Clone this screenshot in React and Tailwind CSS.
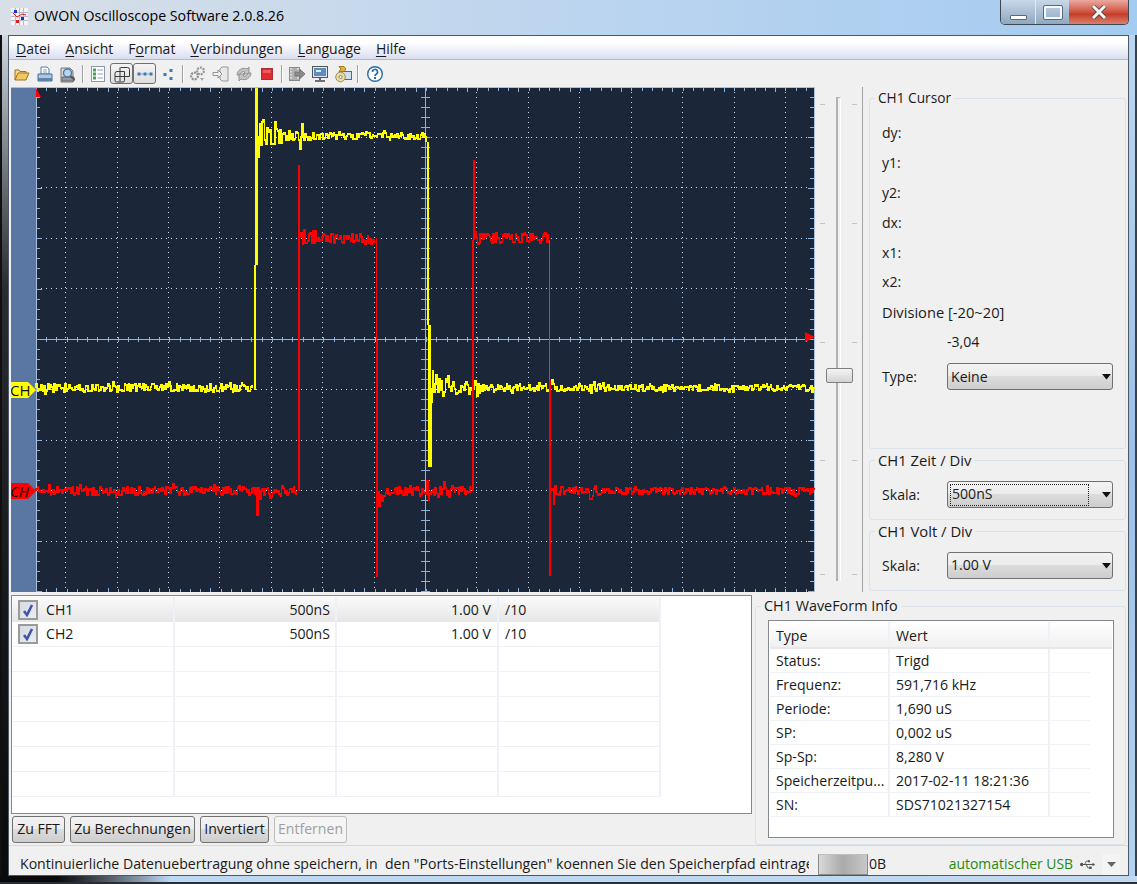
import React from "react";
import { FaUsb } from "react-icons/fa";

let seedCounter = 1;
function r() {
  seedCounter += 1;
  const v = Math.sin(seedCounter * 12.9898 + 4.1414) * 43758.5453;
  return v - Math.floor(v);
}
function noisy(x0, x1, y, amp, rings = []) {
  let d = `M${x0} ${y}`;
  for (let x = x0; x <= x1; x += 1.3) {
    let a = amp;
    for (const [rx, ra, dec] of rings) if (x >= rx) a += ra * Math.exp(-(x - rx) / dec);
    const u = r() * 2 - 1;
    const spike = r() > 0.9 ? 1.6 : 1;
    const n = Math.round(y + Math.sign(u) * Math.pow(Math.abs(u), 0.8) * a * spike);
    d += `V${n}H${(x + 1.3).toFixed(1)}`;
  }
  return d;
}
const yA = noisy(37, 254, 388, 4);
const yB = noisy(259, 427, 136, 3, [[259, 22, 14], [300, 14, 4], [378, 16, 4]]);
const yC = noisy(432, 815, 388, 3, [[432, 22, 12], [474, 16, 3], [551, 18, 3], [590, 10, 4]]);
const rA = noisy(37, 298, 491, 4.5, [[257, 22, 1.5], [268, 9, 4]]);
const rB = noisy(302, 376, 238, 5, [[302, 10, 3]]);
const rC = noisy(380, 472, 491, 4.5, [[380, 12, 4], [428, 14, 3], [445, 5, 5]]);
const rD = noisy(476, 549, 238, 5, [[476, 10, 3]]);
const rE = noisy(553, 815, 491, 3.5, [[553, 14, 4], [590, 9, 4]]);

const vMajor = [66, 118, 169, 220, 272, 323, 375, 477, 529, 580, 632, 683, 735, 786];
const hMajor = [137, 187, 238, 288, 389, 440, 490, 541];
const xTicks = [];
for (let x = 47; x < 815; x += 10.27) xTicks.push(Math.round(x));
const yTicks = [];
for (let y = 97; y < 591; y += 10.08) yTicks.push(Math.round(y));
const GRID = "#8db2dc";

function Plot() {
  return (
    <svg width="804" height="505" viewBox="12 87 804 505" className="block shrink-0" shapeRendering="crispEdges">
      <rect x="12" y="87" width="804" height="505" fill="#1b2639" />
      <rect x="12" y="87" width="25" height="505" fill="#5a76a3" />
      <path d="M37.5 87V592M12 87.5H815.5V592" stroke="#a8c0dc" fill="none" />
      {vMajor.map((x) => (
        <line key={x} x1={x + 0.5} x2={x + 0.5} y1="92" y2="590" stroke="#c0dcf8" strokeDasharray="1 4" />
      ))}
      {hMajor.map((y) => (
        <line key={y} x1="42" x2="812" y1={y + 0.5} y2={y + 0.5} stroke="#c0dcf8" strokeDasharray="1 4" />
      ))}
      <line x1="426.5" x2="426.5" y1="87" y2="592" stroke={GRID} />
      <line x1="37" x2="815" y1="339.5" y2="339.5" stroke={GRID} />
      {xTicks.map((x, i) => {
        const h = i % 5 === 1 ? 4 : 3;
        return (
          <path key={x} d={`M${x + 0.5} 88V${88 + h}M${x + 0.5} 592V${592 - h}M${x + 0.5} 337V342`} stroke={GRID} />
        );
      })}
      {yTicks.map((y, i) => (
        <path key={y} d={`M38 ${y + 0.5}H${i % 5 === 4 ? 43 : 41}M815 ${y + 0.5}H${i % 5 === 4 ? 809 : 811}M422 ${y + 0.5}H431`} stroke={GRID} />
      ))}

      <g fill="none" stroke="#ffff00" strokeWidth="1.5">
        <path d={yA} />
        <path d={yB} />
        <path d={yC} />
        <path d="M257 265V88" strokeWidth="3" />
        <path d="M256 390V265" strokeWidth="2" />
        <path d="M427 136V142" />
        <path d="M429 142V325" strokeWidth="2" />
        <path d="M430 325V467" strokeWidth="3" />
        <path d="M432 467V388" strokeWidth="1" />
      </g>
      <g fill="none" stroke="#ff0000" strokeWidth="1.5">
        <path d={rA} />
        <path d="M300 491V165" strokeWidth="2" />
        <path d={rB} />
        <path d="M377 238V340" strokeWidth="1" />
        <path d="M378 340V577" strokeWidth="2" />
        <path d={rC} />
        <path d="M474 491V420" />
        <path d="M474 420V240" strokeWidth="1.5" />
        <path d="M475 240V160" strokeWidth="2" />
        <path d={rD} />
        <path d={rE} />
        <path d="M551 380V576" strokeWidth="2" />
        <path d="M551 576V491" />
      </g>
      <line x1="550.5" x2="550.5" y1="240" y2="380" stroke="#5a6a80" />

      <g shapeRendering="auto">
        <polygon points="37,88 37,97 42,97" fill="#ff0000" />
        <polygon points="806,332 816,337 806,342" fill="#ff0000" />
        <polygon points="11,382 29,382 37,390 29,398 11,398" fill="#ffff00" />
        <polygon points="11,483 29,483 37,491 29,499 11,499" fill="#ff0000" />
        <text x="11" y="396" fontSize="15" fill="#111" fontFamily="'Open Sans',sans-serif">CH</text>
        <text x="11" y="497" fontSize="15" fill="#111" fontFamily="'Open Sans',sans-serif" fontStyle="italic">CH</text>
      </g>
    </svg>
  );
}

const Ico = ({ children }) => (
  <svg width="18" height="18" viewBox="0 0 18 18" fill="none" className="block">{children}</svg>
);

const icons = {
  open: (
    <Ico>
      <path d="M2 15V5h4l1 1.5h6V9" stroke="#a0701c" fill="#f6dc8e" />
      <path d="M2 15l3-7h11l-3 7z" stroke="#a0701c" fill="#f4c860" />
    </Ico>
  ),
  print: (
    <Ico>
      <path d="M5 2h6l2 2v5H5z" fill="#fff" stroke="#5a7ea8" />
      <path d="M7 5h4M7 7h4" stroke="#8aa4c4" />
      <path d="M2 9h14v5H2z" fill="#a9c8e6" stroke="#4a6e98" />
      <path d="M2 14h14v2H2z" fill="#6e98c4" stroke="#4a6e98" />
    </Ico>
  ),
  preview: (
    <Ico>
      <path d="M2 3h9l3 3v11H2z" fill="#dadada" stroke="#777" />
      <path d="M3 12h12v4H3z" fill="#999" stroke="#666" />
      <circle cx="8.5" cy="8" r="4" fill="#b8d4ee" stroke="#4a78a8" strokeWidth="1.4" />
      <path d="M11.5 11l4 4" stroke="#555" strokeWidth="2" />
    </Ico>
  ),
  list: (
    <Ico>
      <rect x="2.5" y="1.5" width="13" height="15" fill="#fff" stroke="#8a98a8" />
      <rect x="4" y="3.5" width="3" height="3" fill="#4aa050" />
      <rect x="4" y="7.5" width="3" height="3" fill="#4aa050" />
      <rect x="4" y="11.5" width="3" height="3" fill="#4aa050" />
      <path d="M8.5 5h5.5M8.5 9h5.5M8.5 13h5.5" stroke="#8aa0b8" />
    </Ico>
  ),
  grid: (
    <Ico>
      <path d="M7.5 2.5h7a2 2 0 0 1 2 2v7h-5M2 11.5V8.5a2 2 0 0 1 2-2h7.5v9a1.5 1.5 0 0 1-1.5 1.5H3.5a1.5 1.5 0 0 1-1.5-1.5zM7 2.5V16.5M2 11.5h9.5" stroke="#3a3a3a" />
    </Ico>
  ),
  line: (
    <Ico>
      <rect x="1.5" y="7.5" width="3" height="3" fill="#3a78b8" />
      <rect x="7.5" y="7.5" width="3" height="3" fill="#3a78b8" />
      <rect x="13.5" y="7.5" width="3" height="3" fill="#3a78b8" />
      <path d="M4.5 9h3M10.5 9h3" stroke="#7a9cc0" />
    </Ico>
  ),
  points: (
    <Ico>
      <rect x="10.5" y="4" width="3" height="3" fill="#3a78b8" />
      <rect x="4.5" y="8" width="3" height="3" fill="#3a78b8" />
      <rect x="10.5" y="12" width="3" height="3" fill="#3a78b8" />
    </Ico>
  ),
  gears: (
    <Ico>
      <circle cx="11.5" cy="6" r="3.4" stroke="#989898" strokeWidth="2.2" strokeDasharray="2 1" />
      <circle cx="5.5" cy="11" r="3.4" stroke="#909090" strokeWidth="2.2" strokeDasharray="2 1" />
      <path d="M11 13l2 3 2-3z" fill="#a8a8a8" />
    </Ico>
  ),
  enter: (
    <Ico>
      <path d="M10 2h6v14h-6l-2-2V4z" fill="#e8e8e8" stroke="#999" />
      <path d="M1 7.5h5V5l4 4-4 4v-2.5H1z" fill="#f4f4f4" stroke="#909090" />
    </Ico>
  ),
  sync: (
    <Ico>
      <path d="M2 10a7 7 0 0 1 10-6l2-2v7H8l2-2a3.5 3.5 0 0 0-5 3z" fill="#c4c4c4" stroke="#909090" />
      <path d="M16 8a7 7 0 0 1-10 6l-2 2V9h6l-2 2a3.5 3.5 0 0 0 5-3z" fill="#c4c4c4" stroke="#909090" />
    </Ico>
  ),
  stop: (
    <Ico>
      <rect x="3.5" y="3.5" width="11" height="11" fill="#e02c30" stroke="#a83038" />
      <rect x="5" y="5" width="8" height="3" fill="#f0585c" />
    </Ico>
  ),
  film: (
    <Ico>
      <rect x="1.5" y="2.5" width="10" height="13" fill="#b0b0b0" stroke="#8a8a8a" />
      <path d="M3 3v12M10 3v12" stroke="#ddd" strokeDasharray="1.5 1.5" strokeWidth="2" />
      <path d="M7 7h5V4.5l5 4.5-5 4.5V11H7z" fill="#8c8c8c" stroke="#777" />
    </Ico>
  ),
  monitor: (
    <Ico>
      <rect x="1.5" y="1.5" width="15" height="11" fill="#dfe8f2" stroke="#555" />
      <rect x="3" y="3" width="12" height="8" fill="#5c8cc0" />
      <rect x="5" y="5" width="5" height="2" fill="#e4eef8" />
      <path d="M9 13v2M4 16h10" stroke="#444" strokeWidth="1.6" />
    </Ico>
  ),
  cd: (
    <Ico>
      <rect x="7.5" y="6.5" width="10" height="8" fill="#cfe0f2" stroke="#3a6ea8" />
      <circle cx="6.5" cy="12" r="4.8" fill="#e8dc9c" stroke="#a09050" />
      <circle cx="6.5" cy="12" r="1.5" fill="#fff" stroke="#888" />
      <path d="M5 1.5h5l2 2.5-2 2.5H5l2-2.5z" fill="#e8b040" stroke="#a87818" />
    </Ico>
  ),
  help: (
    <svg width="18" height="18" viewBox="0 0 18 18" fill="none" className="block">
      <circle cx="9" cy="9" r="7.3" fill="#fff" stroke="#2a6aa8" strokeWidth="1.4" />
      <path d="M6.5 7a2.5 2.5 0 1 1 3.6 2.2c-.8.4-1.1.9-1.1 1.8" stroke="#2a6aa8" strokeWidth="1.7" />
      <rect x="8" y="12" width="2" height="2" fill="#2a6aa8" />
    </svg>
  ),
};

const Slot = ({ children, active }) => (
  <div
    className={
      "w-[23px] h-[21px] flex items-center justify-center rounded-[3px] " +
      (active ? "border border-[#6f6f6f] bg-gradient-to-b from-[#f4f4f4] to-[#dedede]" : "")
    }
  >
    {children}
  </div>
);
const Sep = () => (
  <div className="w-[7px] flex justify-center">
    <div className="w-px h-[18px] bg-[#a0a0a0] border-r border-white box-content" />
  </div>
);

const Combo = ({ value, focus }) => (
  <div className="w-[166px] h-[27px] flex items-center border border-[#707070] rounded-[3px] bg-[linear-gradient(#f3f3f3_0%,#ebebeb_48%,#dcdcdc_50%,#cdcdcd_100%)]">
    <div className={"ml-[2px] w-[139px] h-[22px] pl-[1px] flex items-center leading-none " + (focus ? "border border-dotted border-[#222]" : "")}>
      {value}
    </div>
    <svg width="10" height="6" viewBox="0 0 10 6" className="ml-[13px]"><path d="M0 0h9L4.5 5.5z" fill="#111" /></svg>
  </div>
);

const Group = ({ title, className, legend, children }) => (
  <fieldset className={"border border-[#dce2ea] rounded-[3px] " + className}>
    <legend className={"ml-[5px] px-[3px] h-[20px] leading-[20px] text-[#1a1a1a] " + legend}>{title}</legend>
    {children}
  </fieldset>
);

const cursor = ["dy:", "y1:", "y2:", "dx:", "x1:", "x2:"];
const rows = [
  ["CH1", "500nS", "1.00 V", "/10"],
  ["CH2", "500nS", "1.00 V", "/10"],
  null, null, null, null, null, null,
];
const info = [
  ["Status:", "Trigd"],
  ["Frequenz:", "591,716 kHz"],
  ["Periode:", "1,690 uS"],
  ["SP:", "0,002 uS"],
  ["Sp-Sp:", "8,280 V"],
  ["Speicherzeitpu...", "2017-02-11 18:21:36"],
  ["SN:", "SDS71021327154"],
];

const Check = () => (
  <div className="w-[20px] h-[20px] border-2 border-[#9a9a9a] bg-gradient-to-br from-[#d4d8e0] to-[#eceef2] flex items-center justify-center">
    <svg width="14" height="14" viewBox="0 0 14 14" fill="none"><path d="M3 8l3 4 5-10" stroke="#3f58a8" strokeWidth="2.6" /></svg>
  </div>
);

const Btn = ({ children, w, disabled }) => (
  <div
    style={{ width: w }}
    className={
      "h-[27px] flex items-center justify-center rounded-[3px] border leading-none " +
      (disabled
        ? "border-[#bdbdbd] bg-[#f4f4f4] text-[#a0a0a0]"
        : "border-[#707070] bg-[linear-gradient(#f3f3f3_0%,#ebebeb_48%,#dcdcdc_50%,#cdcdcd_100%)]")
    }
  >
    {children}
  </div>
);

const U = ({ children }) => <span className="underline underline-offset-2">{children}</span>;

const Ticks = ({ side }) => (
  <div className={"absolute top-[17px] w-[5px] flex flex-col " + side}>
    <div className="h-px bg-[#c4c4c4]" />
    <div className="h-px bg-[#c4c4c4] mt-[118px]" />
    <div className="h-px bg-[#c4c4c4] mt-[118px]" />
    <div className="h-px bg-[#c4c4c4] mt-[117px]" />
    <div className="h-px bg-[#c4c4c4] mt-[113px]" />
  </div>
);

export default function App() {
  return (
    <div className="w-[1137px] h-[884px] overflow-hidden flex flex-col bg-gradient-to-r from-[#d9dfe6] via-[#bcd5ef] to-[#a4cbf0] font-['Open_Sans',sans-serif] text-[14.1px] text-[#1a1a1a]">
      {/* title bar */}
      <div className="h-[35px] shrink-0 flex items-start">
        <div className="flex items-center h-[30px] pl-[11px] pt-[2px]">
          <svg width="17" height="17" viewBox="0 0 17 17" className="block">
            <rect width="17" height="17" fill="#f4f4f8" />
            <path d="M0 4.5h17M0 8.5h17M0 12.5h17M4.5 0v17M8.5 0v17M12.5 0v17" stroke="#b8b8c8" />
            <path d="M2 5l4 4 5-3 4 1" stroke="#e02020" fill="none" />
            <rect x="3" y="2" width="3" height="3" fill="#2030d0" />
            <rect x="10" y="9" width="3" height="3" fill="#2030d0" />
            <rect x="5" y="12" width="3" height="3" fill="#e02020" />
          </svg>
          <span className="ml-[6px] text-[14.2px] text-black whitespace-nowrap">OWON Oscilloscope Software 2.0.8.26</span>
        </div>
        <div className="ml-auto mr-[8px] h-[25px] flex border border-t-0 border-[#3e4650] rounded-b-[5px] overflow-hidden">
          <div className="w-[35px] bg-gradient-to-b from-[#c8d8e8] to-[#8fa8c0] border-r border-[#e0e8f0] flex items-end justify-center pb-[4px]">
            <div className="w-[17px] h-[5px] bg-white border border-[#5a6a7a] rounded-[1px]" />
          </div>
          <div className="w-[33px] bg-gradient-to-b from-[#c8d8e8] to-[#8fa8c0] flex items-center justify-center">
            <div className="w-[18px] h-[13px] bg-transparent border-2 border-[#f4f8fc] outline outline-1 outline-[#5a6a7a] rounded-[1px]" />
          </div>
          <div className="w-[59px] bg-gradient-to-b from-[#eaa9a0] via-[#c63c28] via-60% to-[#d8806c] flex items-center justify-center">
            <svg width="16" height="14" viewBox="0 0 16 14">
              <path d="M2 1l12 12M14 1L2 13" stroke="#3a3a3a" strokeWidth="4.4" />
              <path d="M2 1l12 12M14 1L2 13" stroke="#f4f4f4" strokeWidth="3" />
            </svg>
          </div>
        </div>
      </div>

      <div className="flex h-[841px] shrink-0">
        <div className="w-[8px] shrink-0 bg-gradient-to-b from-[#d0d8e2] via-[#2a2c30] via-30% to-[#0a0a0a] border-l-2 border-[#101010]" />
        {/* client */}
        <div className="w-[1121px] shrink-0 flex flex-col bg-[#f0f0f0] border border-[#4a5868]">
          {/* menu */}
          <div className="h-[24px] shrink-0 flex items-center pl-[7px] pt-[1px] gap-[15px] text-[14px] bg-gradient-to-b from-white from-30% to-[#d9ddef] border-b border-[#b4b9cc]">
            <span><U>D</U>atei</span>
            <span><U>A</U>nsicht</span>
            <span>F<U>o</U>rmat</span>
            <span><U>V</U>erbindungen</span>
            <span><U>L</U>anguage</span>
            <span><U>H</U>ilfe</span>
          </div>
          {/* toolbar */}
          <div className="h-[27px] shrink-0 flex items-center pl-[1px]">
            <Slot>{icons.open}</Slot>
            <Slot>{icons.print}</Slot>
            <Slot>{icons.preview}</Slot>
            <Sep />
            <Slot>{icons.list}</Slot>
            <div className="w-[1px]" />
            <Slot active>{icons.grid}</Slot>
            <Slot active>{icons.line}</Slot>
            <Slot>{icons.points}</Slot>
            <Sep />
            <Slot>{icons.gears}</Slot>
            <Slot>{icons.enter}</Slot>
            <Slot>{icons.sync}</Slot>
            <Slot>{icons.stop}</Slot>
            <Sep />
            <Slot>{icons.film}</Slot>
            <Slot>{icons.monitor}</Slot>
            <Slot>{icons.cd}</Slot>
            <Sep />
            <div className="w-[2px]" />
            <Slot>{icons.help}</Slot>
          </div>
          {/* upper */}
          <div className="h-[505px] shrink-0 flex pl-[2px]">
            <Plot />
            {/* slider */}
            <div className="w-[48px] shrink-0 border-r border-[#a0a0a0] relative flex justify-center">
              <Ticks side="left-[5px]" />
              <Ticks side="right-[5px]" />
              <div className="mt-[10px] h-[484px] w-[5px] border-l-2 border-t border-[#b0b4b4] border-r border-r-white bg-[#f0f0f0]" />
              <div className="absolute left-[11px] top-[281px] w-[27px] h-[15px] rounded-[2px] border border-[#808080] bg-gradient-to-b from-[#f4f4f4] to-[#d4d4d4]" />
            </div>
            {/* right panels */}
            <div className="flex-1 flex flex-col pl-[6px] pr-[2px]">
              <Group title="CH1 Cursor" legend="text-[13.7px]" className="h-[361px] mt-[1px]">
                <div className="pt-[10px] pl-[12px]">
                  {cursor.map((c) => (
                    <div key={c} className="h-[29.8px] flex items-center">{c}</div>
                  ))}
                  <div className="h-[29.8px] flex items-center text-[14.7px]">Divisione [-20~20]</div>
                  <div className="h-[29.8px] flex items-center pl-[65px]">-3,04</div>
                  <div className="mt-[7px] flex items-center">
                    <span className="w-[65px]">Type:</span>
                    <Combo value="Keine" />
                  </div>
                </div>
              </Group>
              <Group title="CH1 Zeit / Div" legend="text-[14.8px]" className="h-[70px] mt-[1px]">
                <div className="pt-[11px] pl-[12px] flex items-center">
                  <span className="w-[65px]">Skala:</span>
                  <Combo value="500nS" focus />
                </div>
              </Group>
              <Group title="CH1 Volt / Div" legend="text-[14.8px]" className="h-[70px] mt-[1px]">
                <div className="pt-[11px] pl-[12px] flex items-center">
                  <span className="w-[65px]">Skala:</span>
                  <Combo value="1.00 V" />
                </div>
              </Group>
            </div>
          </div>
          {/* lower */}
          <div className="flex-1 flex pl-[2px] pt-[3px]">
            <div className="w-[741px] shrink-0 flex flex-col">
              <div className="h-[219px] border border-[#85898f] bg-white pt-[1px] overflow-hidden">
                {rows.map((r, i) => (
                  <div
                    key={i}
                    className={
                      "h-[25px] flex border-b border-[#eef1f8] w-[649px] " +
                      (i === 0 ? "bg-gradient-to-b from-[#fafafa] to-[#e6e6e6] border-b-0" : "")
                    }
                  >
                    <div className="w-[163px] border-r-2 border-[#eef1f8] flex items-center gap-[8px] pl-[6px]">
                      {r && <Check />}
                      {r && <span>{r[0]}</span>}
                    </div>
                    <div className="w-[162px] border-r-2 border-[#eef1f8] flex items-center justify-end pr-[5px]">{r && r[1]}</div>
                    <div className="w-[162px] border-r-2 border-[#eef1f8] flex items-center justify-end pr-[6px]">{r && r[2]}</div>
                    <div className="w-[162px] border-r-2 border-[#eef1f8] flex items-center pl-[6px]">{r && r[3]}</div>
                  </div>
                ))}
              </div>
              <div className="mt-[2px] flex gap-[5px] pl-[1px]">
                <Btn w={53}>Zu FFT</Btn>
                <Btn w={125}>Zu Berechnungen</Btn>
                <Btn w={69}>Invertiert</Btn>
                <Btn w={73} disabled>Entfernen</Btn>
              </div>
            </div>
            <div className="flex-1 pl-[3px] pr-[2px]">
              <Group title="CH1 WaveForm Info" legend="text-[14.4px]" className="h-[249px] mt-[1px]">
                <div className="mt-[4px] ml-[12px] w-[346px] h-[218px] border border-[#85898f] bg-white p-[1px]">
                  <div className="h-[27px] flex bg-gradient-to-b from-white to-[#f0f0f0] border-b-2 border-[#e8e8e8]">
                    <div className="w-[120px] border-r-2 border-[#eef1f8] pl-[6px] pt-[2px] flex items-center">Type</div>
                    <div className="w-[160px] border-r-2 border-[#eef1f8] pl-[6px] pt-[2px] flex items-center">Wert</div>
                  </div>
                  {info.map(([a, b]) => (
                    <div key={a} className="w-[320px] h-[24px] flex border-b border-[#eef1f8]">
                      <div className="w-[120px] border-r-2 border-[#eef1f8] pl-[6px] flex items-center whitespace-nowrap">{a}</div>
                      <div className="w-[160px] border-r-2 border-[#eef1f8] pl-[6px] flex items-center whitespace-nowrap">{b}</div>
                    </div>
                  ))}
                </div>
              </Group>
            </div>
          </div>
          {/* status */}
          <div className="h-[30px] shrink-0 flex items-center border-t border-[#d8d8d8] pl-[11px] pt-[7px]">
            <div className="w-[789px] overflow-hidden whitespace-pre">Kontinuierliche Datenuebertragung ohne speichern, in  den "Ports-Einstellungen" koennen Sie den Speicherpfad eintragen</div>
            <div className="ml-[9px] w-[50px] h-[21px] border border-[#8a8a8a] border-t-[#c0c0c0] bg-gradient-to-r from-[#d8d8d8] via-[#aaaaaa] to-[#c8c8c8]" />
            <span className="ml-[1px]">0B</span>
            <span className="ml-auto text-[13.9px] text-[#1e8a10]">automatischer USB</span>
            <FaUsb size={15} color="#555" className="ml-[7px]" />
            <div className="ml-[7px] mr-[8px] w-[18px] h-[21px] bg-[#f4f4f4] flex items-center justify-center">
              <svg width="9" height="5" viewBox="0 0 9 5"><path d="M0 0h9L4.5 5z" fill="#666" /></svg>
            </div>
          </div>
        </div>
        <div className="w-[8px] shrink-0 bg-gradient-to-b from-[#bcd6f0] via-[#9cc0e8] to-[#b4d2f0] border-r-2 border-[#3a4048]" />
      </div>
      <div className="flex-1 bg-gradient-to-r from-[#0a0a0a] from-5% via-[#bcd8f4] via-15% to-[#c0d8f0] border-b-2 border-[#2a2e34]" />
    </div>
  );
}
